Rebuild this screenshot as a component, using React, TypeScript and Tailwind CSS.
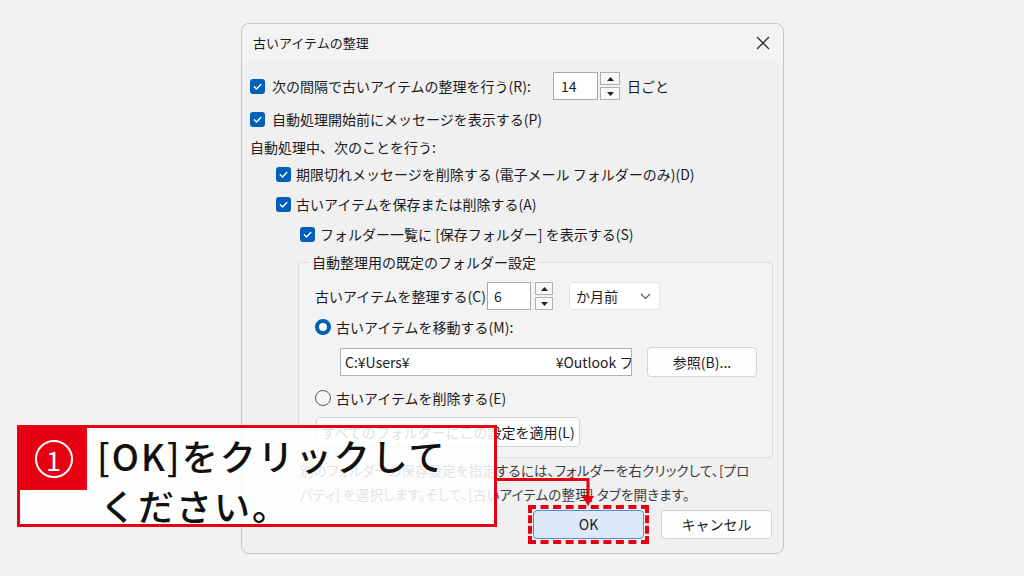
import React from "react";

const F = "font-['Noto_Sans_CJK_JP','Noto_Sans',sans-serif]";

function Check() {
  return (
    <span className="w-[15px] h-[15px] rounded-[3px] bg-[#005fb8] flex items-center justify-center shrink-0">
      <svg width="11" height="11" viewBox="0 0 11 11">
        <path d="M2.3 5.8 L4.5 8 L8.8 3.4" stroke="white" strokeWidth="1.4" fill="none" strokeLinecap="round" strokeLinejoin="round" />
      </svg>
    </span>
  );
}

function Radio({ on }: { on?: boolean }) {
  return on ? (
    <span className="w-[16px] h-[16px] rounded-full border-[4px] border-[#005fb8] bg-white shrink-0" />
  ) : (
    <span className="w-[16px] h-[16px] rounded-full border border-[#5a5a5a] bg-[#f7f7f7] shrink-0" />
  );
}

function Spin({ w }: { w: string }) {
  return (
    <div className={`flex flex-col gap-[2px] h-[28px] ${w}`}>
      <div className="flex-1 border border-[#b0b0b0] bg-[#f8f8f8] flex items-center justify-center">
        <svg width="7" height="4" viewBox="0 0 7 4"><path d="M0 4 L3.5 0 L7 4Z" fill="#222" /></svg>
      </div>
      <div className="flex-1 border border-[#b0b0b0] bg-[#f8f8f8] flex items-center justify-center">
        <svg width="7" height="4" viewBox="0 0 7 4"><path d="M0 0 L3.5 4 L7 0Z" fill="#222" /></svg>
      </div>
    </div>
  );
}

function Btn({ children, cls }: { children: React.ReactNode; cls: string }) {
  return (
    <div className={`flex items-center justify-center bg-[#fdfdfd] border border-[#d3d3d3] rounded-[4px] text-[14px] ${cls}`}>
      {children}
    </div>
  );
}

export default function App() {
  return (
    <div className={`relative w-[1024px] h-[576px] bg-[#f2f2f2] overflow-hidden ${F} text-[#1b1b1b]`}>
      <div className="pl-[241px] pt-[23px]">
        <div className="w-[543px] h-[531px] rounded-[8px] border border-[#c6c6c6] bg-[#f0f0f0] flex flex-col">
          {/* title bar */}
          <div className="h-[38px] flex items-center justify-between pl-[11px] pr-[13px] rounded-t-[8px] bg-[#f3f3f3]">
            <span className="text-[13px]">古いアイテムの整理</span>
            <svg width="14" height="14" viewBox="0 0 14 14">
              <path d="M1 1 L13 13 M13 1 L1 13" stroke="#2b2b2b" strokeWidth="1.3" />
            </svg>
          </div>

          <div className="flex flex-col pl-[8px] pt-[9px] text-[14px]">
            {/* row 1 */}
            <div className="h-[30px] flex items-center">
              <Check />
              <span className="ml-[7px] w-[281px] whitespace-nowrap">次の間隔で古いアイテムの整理を行う(R):</span>
              <div className="w-[45px] h-[28px] bg-white border border-[#a9a9a9] flex items-center pl-[7px]">14</div>
              <div className="ml-[2px]"><Spin w="w-[20px]" /></div>
              <span className="ml-[7px]">日ごと</span>
            </div>
            {/* row 2 */}
            <div className="mt-[5px] h-[26px] flex items-center">
              <Check />
              <span className="ml-[7px] whitespace-nowrap">自動処理開始前にメッセージを表示する(P)</span>
            </div>
            {/* row 3 */}
            <div className="mt-[2px] h-[26px] flex items-center">
              <span className="whitespace-nowrap">自動処理中、次のことを行う:</span>
            </div>
            {/* row 4 */}
            <div className="mt-[1px] h-[26px] flex items-center pl-[26px]">
              <Check />
              <span className="ml-[5px] whitespace-nowrap">期限切れメッセージを削除する (電子メール フォルダーのみ)(D)</span>
            </div>
            {/* row 5 */}
            <div className="mt-[4px] h-[26px] flex items-center pl-[26px]">
              <Check />
              <span className="ml-[5px] whitespace-nowrap">古いアイテムを保存または削除する(A)</span>
            </div>
            {/* row 6 */}
            <div className="mt-[4px] h-[26px] flex items-center pl-[50px]">
              <Check />
              <span className="ml-[5px] whitespace-nowrap">フォルダー一覧に [保存フォルダー] を表示する(S)</span>
            </div>

            {/* group box */}
            <fieldset className="mt-[5px] ml-[48px] w-[475px] border border-[#dcdcdc] rounded-[3px] bg-[#f3f3f3] pl-[16px] pb-[10px]">
              <legend className="ml-[-5px] px-[2px] leading-[20px] whitespace-nowrap">自動整理用の既定のフォルダー設定</legend>
              <div className="mt-[10px] h-[28px] flex items-center">
                <span className="w-[172px] whitespace-nowrap">古いアイテムを整理する(C)</span>
                <div className="w-[44px] h-[28px] bg-white border border-[#a9a9a9] flex items-center pl-[6px]">6</div>
                <div className="ml-[4px]"><Spin w="w-[18px]" /></div>
                <div className="ml-[16px] w-[91px] h-[28px] bg-white border border-[#e2e2e2] rounded-[3px] flex items-center justify-between pl-[6px] pr-[8px]">
                  <span>か月前</span>
                  <svg width="11" height="7" viewBox="0 0 11 7"><path d="M1 1 L5.5 5.5 L10 1" stroke="#555" strokeWidth="1.1" fill="none" /></svg>
                </div>
              </div>
              <div className="mt-[4px] h-[26px] flex items-center">
                <Radio on />
                <span className="ml-[5px] whitespace-nowrap">古いアイテムを移動する(M):</span>
              </div>
              <div className="mt-[6px] h-[32px] flex items-center">
                <div className="ml-[25px] w-[292px] h-[28px] bg-white border border-[#a9b4c0] flex items-center pl-[4px] overflow-hidden whitespace-nowrap">
                  <span>C:¥Users¥</span>
                  <span className="w-[146px] shrink-0" />
                  <span>¥Outlook フ</span>
                </div>
                <Btn cls="ml-[15px] w-[110px] h-[30px]">参照(B)...</Btn>
              </div>
              <div className="mt-[7px] h-[26px] flex items-center">
                <Radio />
                <span className="ml-[5px] whitespace-nowrap">古いアイテムを削除する(E)</span>
              </div>
              <Btn cls="mt-[6px] ml-[1px] w-[264px] h-[30px]">すべてのフォルダーにこの設定を適用(L)</Btn>
            </fieldset>

            {/* info text */}
            <div className="ml-[50px] text-[13.5px] tracking-[0.2px] leading-[24px] text-[#3c3c3c] whitespace-nowrap [font-feature-settings:'palt']">
              <div>別のフォルダーの保存設定を指定するには、フォルダーを右クリックして、[プロ</div>
              <div>パティ] を選択します。そして、[古いアイテムの整理] タブを開きます。</div>
            </div>

            {/* buttons */}
            <div className="mt-[-1px] pr-[11px] flex items-center justify-end">
              <div className="border-[4px] border-dashed border-[#e60012] p-[1px]">
                <div className="w-[111px] h-[29px] flex items-center justify-center bg-[#dde9f8] border border-[#4d8fd1] rounded-[4px]">OK</div>
              </div>
              <Btn cls="ml-[12px] w-[111px] h-[29px]">キャンセル</Btn>
            </div>
          </div>
        </div>
      </div>

      {/* callout */}
      <div className="absolute left-[17px] top-[425px] w-[480px] h-[102px] border-[3px] border-[#e60012] bg-white/85 flex">
        <div className="w-[67px] h-[62px] bg-[#e60012] flex items-center justify-center shrink-0">
          <div className="w-[38px] h-[38px] rounded-full border-[2px] border-white flex items-center justify-center text-white text-[27px] leading-none font-normal">1</div>
        </div>
        <div className="pl-[10px] pt-[2px] text-[36px] leading-[50px] tracking-[2px] font-medium text-[#111] whitespace-nowrap">
          <div>[OK]をクリックして</div>
          <div className="pl-[3px]">ください。</div>
        </div>
      </div>

      {/* arrow */}
      <svg className="absolute left-[494px] top-[470px]" width="110" height="40" viewBox="0 0 110 40">
        <path d="M0 9.5 H94 V27" stroke="#e60012" strokeWidth="3" fill="none" />
        <path d="M88 26 L100 26 L94 36 Z" fill="#e60012" />
      </svg>
    </div>
  );
}
